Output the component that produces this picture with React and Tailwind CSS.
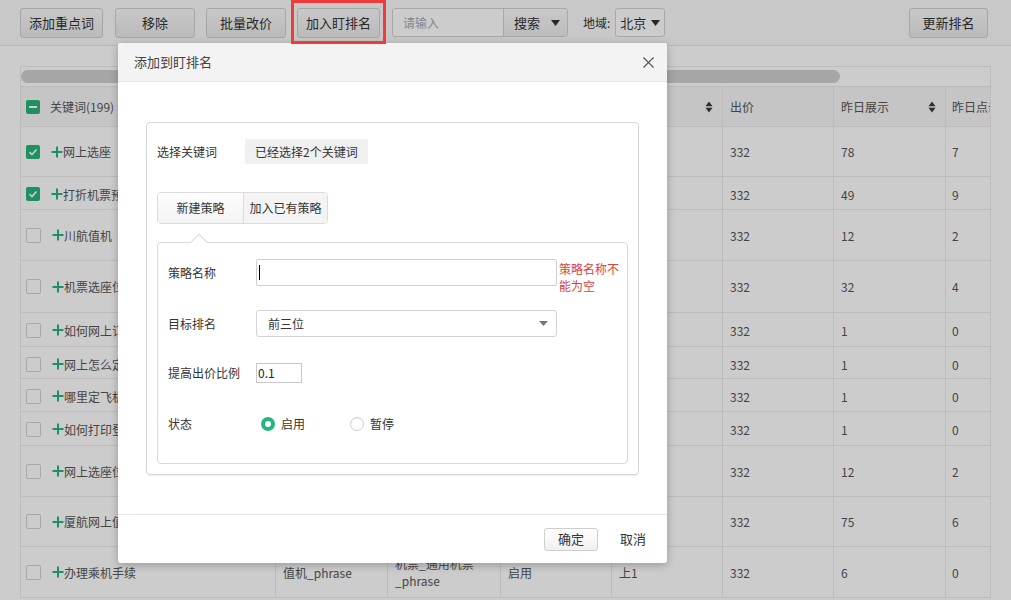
import { X } from 'lucide-react';

const cols = 'grid grid-cols-[255px_112px_113px_111px_111px_111px_112px_112px]';

const rows = [
  { kw: '网上选座', checked: true, h: 'h-[50px]', show: '78', click: '7' },
  { kw: '打折机票预订', checked: true, h: 'h-[33px]', show: '49', click: '9' },
  { kw: '川航值机', h: 'h-[51px]', show: '12', click: '2' },
  { kw: '机票选座位', h: 'h-[52px]', show: '32', click: '4' },
  { kw: '如何网上订机票', h: 'h-[34px]', show: '1', click: '0' },
  { kw: '网上怎么定机票', h: 'h-[32px]', show: '1', click: '0' },
  { kw: '哪里定飞机票', h: 'h-[33px]', show: '1', click: '0' },
  { kw: '如何打印登机牌', h: 'h-[34px]', show: '1', click: '0' },
  { kw: '网上选座位', h: 'h-[51px]', show: '12', click: '2' },
  { kw: '厦航网上值机', h: 'h-[50px]', show: '75', click: '6' },
  { kw: '办理乘机手续', h: 'h-[51px]', show: '6', click: '0' },
];

function Check({ state }) {
  if (state === 'on') {
    return (
      <span className="w-[14px] h-[14px] rounded-[2px] bg-[#26b47e] flex items-center justify-center shrink-0">
        <svg width="10" height="10" viewBox="0 0 10 10"><path d="M1.5 5.2L4 7.5L8.5 2.5" stroke="#fff" strokeWidth="1.6" fill="none" /></svg>
      </span>
    );
  }
  if (state === 'part') {
    return (
      <span className="w-[14px] h-[14px] rounded-[2px] bg-[#26b47e] flex items-center justify-center shrink-0">
        <span className="w-[8px] h-[2px] bg-white" />
      </span>
    );
  }
  return <span className="w-[15px] h-[15px] rounded-[2px] border border-[#d2d2d2] bg-white shrink-0" />;
}

function Plus() {
  return (
    <svg width="12" height="12" viewBox="0 0 12 12" className="shrink-0"><path d="M6 0.5V11.5M0.5 6H11.5" stroke="#26b47e" strokeWidth="2" /></svg>
  );
}

function Sort() {
  return (
    <svg width="8" height="12" viewBox="0 0 8 12"><path d="M4 0.5L7.5 5.2H0.5z M0.5 6.8H7.5L4 11.5z" fill="#3a3a3a" /></svg>
  );
}

function ToolBtn({ children, w }) {
  return (
    <button className={`h-[30px] ${w} rounded-[3px] border border-[#d0d0d0] bg-gradient-to-b from-[#fbfbfb] to-[#e9e9e9] text-[13px] text-[#333]`}>
      {children}
    </button>
  );
}

export default function App() {
  return (
    <div className="relative w-[1011px] h-[600px] overflow-hidden bg-white font-['Noto_Sans_CJK_SC','Liberation_Sans',sans-serif] text-[#555]">
      {/* toolbar */}
      <div className="h-[46px] flex items-center pl-[20px] pr-[23px] bg-[#fbfbfb] border-b border-[#e6e6e6]">
        <ToolBtn w="w-[83px]">添加重点词</ToolBtn>
        <div className="ml-[12px]"><ToolBtn w="w-[80px]">移除</ToolBtn></div>
        <div className="ml-[11px]"><ToolBtn w="w-[80px]">批量改价</ToolBtn></div>
        <div className="relative ml-[11px]">
          <ToolBtn w="w-[83px]">加入盯排名</ToolBtn>
          <div className="absolute -left-[6px] -top-[8px] w-[95px] h-[44px] border-[3px] border-[#ee3b3b] z-30" />
        </div>
        <div className="ml-[12px] flex h-[29px] border border-[#d3d3d3] rounded-[3px] bg-white">
          <div className="w-[110px] flex items-center pl-[10px] text-[12px] text-[#aaa]">请输入</div>
          <div className="w-[64px] flex items-center justify-between pl-[10px] pr-[7px] border-l border-[#d3d3d3] bg-gradient-to-b from-[#fbfbfb] to-[#ececec] text-[13px] text-[#333] rounded-r-[3px]">
            搜索
            <svg width="9" height="6" viewBox="0 0 9 6"><path d="M0 0H9L4.5 6z" fill="#333" /></svg>
          </div>
        </div>
        <span className="ml-[15px] text-[12px] text-[#333]">地域:</span>
        <div className="ml-[5px] w-[50px] h-[29px] flex items-center justify-between pl-[4px] pr-[4px] border border-[#d3d3d3] rounded-[3px] bg-white text-[13px] text-[#333]">
          北京
          <svg width="9" height="6" viewBox="0 0 9 6"><path d="M0 0H9L4.5 6z" fill="#333" /></svg>
        </div>
        <div className="ml-auto"><ToolBtn w="w-[79px]">更新排名</ToolBtn></div>
      </div>

      {/* table */}
      <div className="mt-[20px] ml-[20px] w-[971px] border-l border-t border-r border-[#ebebeb] overflow-hidden text-[12px]">
        <div className="h-[20px] flex items-center border-b border-[#ebebeb]">
          <div className="w-[819px] h-[13px] rounded-full bg-[#d0d0d0]" />
        </div>
        <div className={`${cols} h-[40px] bg-[#f7f7f7] border-b border-[#ebebeb]`}>
          <div className="flex items-center gap-[10px] pl-[5px] border-r border-[#ebebeb]">
            <Check state="part" />
            <span>关键词(199)</span>
          </div>
          <div className="border-r border-[#ebebeb]" />
          <div className="border-r border-[#ebebeb]" />
          <div className="border-r border-[#ebebeb]" />
          <div className="flex items-center justify-end pr-[9px] border-r border-[#ebebeb]"><Sort /></div>
          <div className="flex items-center pl-[7px] border-r border-[#ebebeb]">出价</div>
          <div className="flex items-center justify-between pl-[7px] pr-[9px] border-r border-[#ebebeb]">昨日展示<Sort /></div>
          <div className="flex items-center pl-[6px] whitespace-nowrap overflow-hidden">昨日点击</div>
        </div>
        {rows.map((r) => (
          <div key={r.kw} className={`${cols} ${r.h} border-b border-[#ebebeb] leading-[17px]`}>
            <div className="flex items-center pl-[5px] border-r border-[#ebebeb]">
              <Check state={r.checked ? 'on' : 'off'} />
              <span className="ml-[11px]"><Plus /></span>
              <span>{r.kw}</span>
            </div>
            <div className="flex items-center px-[7px] border-r border-[#ebebeb]">值机_phrase</div>
            <div className="flex items-center px-[7px] border-r border-[#ebebeb]">机票_通用机票 _phrase</div>
            <div className="flex items-center px-[7px] border-r border-[#ebebeb]">启用</div>
            <div className="flex items-center px-[7px] border-r border-[#ebebeb]">上1</div>
            <div className="flex items-center px-[7px] border-r border-[#ebebeb]">332</div>
            <div className="flex items-center px-[7px] border-r border-[#ebebeb]">{r.show}</div>
            <div className="flex items-center px-[6px]">{r.click}</div>
          </div>
        ))}
      </div>

      {/* dim overlay */}
      <div className="absolute inset-0 bg-black/20 z-10" />

      {/* modal */}
      <div className="absolute left-[118px] top-[43px] z-20 w-[549px] h-[520px] bg-white rounded-[3px] shadow-[0_2px_8px_rgba(0,0,0,0.25)] flex flex-col text-[#333]">
        <div className="h-[39px] shrink-0 flex items-center justify-between pl-[16px] pr-[9px] bg-[#f3f3f3] border-b border-[#e4e4e4] rounded-t-[3px]">
          <span className="text-[13px] text-[#444]">添加到盯排名</span>
          <X size={19} strokeWidth={1.4} color="#555" />
        </div>

        <div className="flex-1 px-[28px] pt-[40px]">
          <div className="h-[353px] border border-[#d6d6d6] rounded-[4px] pt-[16px] px-[10px] pb-[10px] shadow-[0_1px_1px_rgba(0,0,0,0.06)] text-[12px]">
            <div className="flex items-center h-[25px]">
              <span className="w-[88px]">选择关键词</span>
              <span className="h-[25px] flex items-center px-[10px] bg-[#f0f0f0] rounded-[2px]">已经选择2个关键词</span>
            </div>

            <div className="mt-[28px] flex w-[171px] h-[32px] border border-[#dcdcdc] rounded-[4px] overflow-hidden">
              <div className="w-[85px] flex items-center justify-center bg-gradient-to-b from-[#fdfdfd] to-[#f3f3f3]">新建策略</div>
              <div className="flex-1 flex items-center justify-center border-l border-[#dcdcdc] bg-[#f4f4f4]">加入已有策略</div>
            </div>

            <div className="relative mt-[18px] h-[222px] border border-[#d9d9d9] rounded-[4px] pt-[16px] pl-[10px]">
              <div className="absolute left-[35px] -top-[7px] w-[12px] h-[12px] rotate-45 bg-white border-l border-t border-[#d9d9d9]" />

              <div className="flex items-start h-[27px]">
                <span className="w-[88px] h-[27px] flex items-center">策略名称</span>
                <div className="w-[301px] h-[27px] border border-[#cfcfcf] rounded-[2px] flex items-center pl-[2px]">
                  <span className="w-[1px] h-[15px] bg-black" />
                </div>
                <span className="ml-[2px] w-[62px] pt-[1px] leading-[17px] text-[#e03c3c]">策略名称不能为空</span>
              </div>

              <div className="mt-[24px] flex items-center h-[27px]">
                <span className="w-[88px]">目标排名</span>
                <div className="w-[301px] h-[27px] border border-[#d3d3d3] rounded-[3px] flex items-center justify-between pl-[11px] pr-[8px]">
                  前三位
                  <svg width="9" height="5" viewBox="0 0 9 5"><path d="M0 0H9L4.5 5z" fill="#777" /></svg>
                </div>
              </div>

              <div className="mt-[26px] flex items-center h-[20px]">
                <span className="w-[88px]">提高出价比例</span>
                <div className="w-[46px] h-[20px] border border-[#c9c9c9] flex items-center pl-[1px] text-[12px] text-[#222]">0.1</div>
              </div>

              <div className="mt-[27px] flex items-center h-[27px]">
                <span className="w-[93px]">状态</span>
                <span className="w-[14px] h-[14px] rounded-full border-[4px] border-[#25b585] bg-white" />
                <span className="ml-[6px]">启用</span>
                <span className="ml-[45px] w-[14px] h-[14px] rounded-full border border-[#cfcfcf] bg-white shadow-[inset_0_1px_1px_rgba(0,0,0,0.08)]" />
                <span className="ml-[6px]">暂停</span>
              </div>
            </div>
          </div>
        </div>

        <div className="h-[49px] shrink-0 flex items-center justify-end pr-[21px] border-t border-[#e6e6e6] text-[13px]">
          <button className="w-[54px] h-[23px] rounded-[3px] border border-[#cfcfcf] bg-gradient-to-b from-[#ffffff] to-[#f0f0f0] text-[#333]">确定</button>
          <span className="ml-[22px] text-[#333]">取消</span>
        </div>
      </div>
    </div>
  );
}
